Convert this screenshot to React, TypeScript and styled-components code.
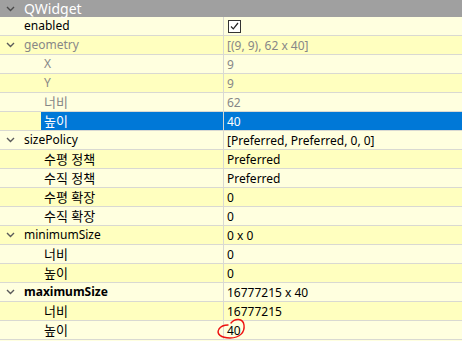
import React from "react";
import styled, { createGlobalStyle } from "styled-components";

const Global = createGlobalStyle`
  html, body { margin: 0; padding: 0; background: #ffffff; }
  body { font-family: "Noto Sans", "Noto Sans CJK KR", sans-serif; font-size: 12px; }
`;

const Panel = styled.div`
  position: relative;
  width: 462px;
  height: 341px;
  overflow: hidden;
  background: #ffffe0;
`;

const Header = styled.div`
  display: flex;
  align-items: center;
  height: 17px;
  background: #a0a0a0;
`;

const HeaderTitle = styled.div`
  padding-left: 3px;
  color: #ffffff;
  font-size: 14px;
  line-height: 17px;
`;

const Branch = styled.div<{ $w: number }>`
  width: ${(p) => p.$w}px;
  flex: none;
  height: 100%;
  display: flex;
  align-items: center;
  justify-content: flex-start;
  padding-left: 6px;
  box-sizing: border-box;
`;

const Row = styled.div<{ $alt: boolean }>`
  display: flex;
  height: 19px;
  box-sizing: border-box;
  border-bottom: 1px solid #d9d9d2;
  background: ${(p) => (p.$alt ? "#ffffbf" : "#ffffdf")};
`;

const NameCell = styled.div`
  width: 224px;
  flex: none;
  display: flex;
  box-sizing: border-box;
  border-right: 1px solid #d9d9d2;
  height: 100%;
`;

const Label = styled.div<{ $sel: boolean; $dim: boolean; $bold: boolean; $ko: boolean }>`
  flex: 1;
  display: flex;
  align-items: center;
  padding-left: 3px;
  line-height: 18px;
  white-space: nowrap;
  font-size: ${(p) => (p.$ko ? 13 : 12)}px;
  background: ${(p) => (p.$sel ? "#0078d7" : "transparent")};
  color: ${(p) => (p.$sel ? "#ffffff" : p.$dim ? "#878787" : "#000000")};
  font-weight: ${(p) => (p.$bold ? 700 : 400)};
`;

const Value = styled.div<{ $sel: boolean; $dim: boolean }>`
  flex: 1;
  display: flex;
  align-items: center;
  padding-left: 3px;
  white-space: nowrap;
  background: ${(p) => (p.$sel ? "#0078d7" : "transparent")};
  color: ${(p) => (p.$sel ? "#ffffff" : p.$dim ? "#878787" : "#000000")};
`;

const CheckBox = styled.div`
  width: 11px;
  height: 11px;
  border: 1px solid #333333;
  background: #ffffff;
  display: flex;
  align-items: center;
  justify-content: center;
  margin-left: 1px;
`;

const Annotation = styled.svg`
  position: absolute;
  left: 0;
  top: 0;
  pointer-events: none;
`;

const Chevron = ({ color }: { color: string }) => (
  <svg width="9" height="6" viewBox="0 0 9 6">
    <path d="M1 1 L4.5 4.5 L8 1" fill="none" stroke={color} strokeWidth="1.4" />
  </svg>
);

type Item = {
  name: string;
  value: string;
  depth: 0 | 1;
  group?: boolean;
  dim?: boolean;
  bold?: boolean;
  sel?: boolean;
  check?: boolean;
};

const items: Item[] = [
  { name: "enabled", value: "", depth: 0, check: true },
  { name: "geometry", value: "[(9, 9), 62 x 40]", depth: 0, group: true, dim: true },
  { name: "X", value: "9", depth: 1, dim: true },
  { name: "Y", value: "9", depth: 1, dim: true },
  { name: "너비", value: "62", depth: 1, dim: true },
  { name: "높이", value: "40", depth: 1, sel: true },
  { name: "sizePolicy", value: "[Preferred, Preferred, 0, 0]", depth: 0, group: true },
  { name: "수평 정책", value: "Preferred", depth: 1 },
  { name: "수직 정책", value: "Preferred", depth: 1 },
  { name: "수평 확장", value: "0", depth: 1 },
  { name: "수직 확장", value: "0", depth: 1 },
  { name: "minimumSize", value: "0 x 0", depth: 0, group: true },
  { name: "너비", value: "0", depth: 1 },
  { name: "높이", value: "0", depth: 1 },
  { name: "maximumSize", value: "16777215 x 40", depth: 0, group: true, bold: true },
  { name: "너비", value: "16777215", depth: 1 },
  { name: "높이", value: "40", depth: 1 },
];

const isKorean = (s: string) => /[\uac00-\ud7a3]/.test(s);

export default function App() {
  return (
    <>
      <Global />
      <Panel>
        <Header>
          <Branch $w={21}>
            <Chevron color="#4a4a4a" />
          </Branch>
          <HeaderTitle>QWidget</HeaderTitle>
        </Header>
        {items.map((it, i) => (
          <Row key={i} $alt={i % 2 === 1}>
            <NameCell>
              <Branch $w={it.depth === 0 ? 21 : 41}>
                {it.group && <Chevron color="#5a5a5a" />}
              </Branch>
              <Label $sel={!!it.sel} $dim={!!it.dim} $bold={!!it.bold} $ko={isKorean(it.name)}>
                {it.name}
              </Label>
            </NameCell>
            <Value $sel={!!it.sel} $dim={!!it.dim}>
              {it.check ? (
                <CheckBox>
                  <svg width="9" height="8" viewBox="0 0 9 8">
                    <path d="M1 4.5 L3.3 6.8 L8 1" fill="none" stroke="#222" strokeWidth="1.2" />
                  </svg>
                </CheckBox>
              ) : (
                it.value
              )}
            </Value>
          </Row>
        ))}
        <Annotation width="462" height="341" viewBox="0 0 462 341">
          <path
            d="M231 323 C235 318, 243 318, 244 325 C245 332, 240 338, 230 338 C221 338, 216 334, 219 329 C221 326, 225 325, 228 325"
            fill="none"
            stroke="#ee1111"
            strokeWidth="1.4"
            strokeLinecap="round"
          />
        </Annotation>
      </Panel>
    </>
  );
}
